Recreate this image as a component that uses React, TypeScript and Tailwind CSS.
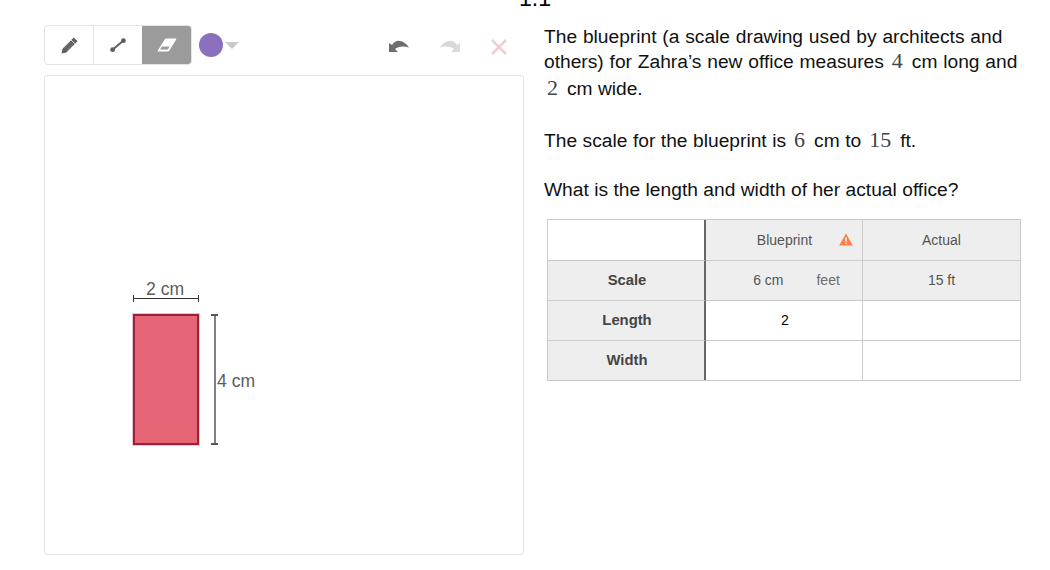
import { useState } from "react";

const sans = { fontFamily: '"Liberation Sans", Arial, sans-serif' };

function M({ children, first }: { children: string; first?: boolean }) {
  return (
    <span className={`${first ? "ml-[3px]" : "ml-[8px]"} mr-[9px] font-['Liberation_Serif',serif] text-[22px] leading-[20px] text-[#444]`}>
      {children}
    </span>
  );
}

function Toolbar() {
  const [tool, setTool] = useState("eraser");
  const btn = "flex h-full items-center justify-center";
  return (
    <div className="flex h-[40px] items-center">
      <div className="flex h-full w-[148px] overflow-hidden rounded-[4px] border border-[#e3e3e3]">
        <button onClick={() => setTool("pencil")} className={`${btn} w-[49px] border-r border-[#e3e3e3]`} aria-label="Pencil">
          <svg viewBox="0 0 16 16" className="h-[17px] w-[17px]">
            <path d="M12 .5 15.5 4 5 14.6.5 15.5 1.4 11Z" fill="#5f5f5f" />
            <path d="M9.6 2.9 13.1 6.4" stroke="#fff" strokeWidth="0.8" />
            <path d="M3.2 10.6 8.8 5M5.4 12.8 11 7.2" stroke="#8b8b8b" strokeWidth="0.7" />
          </svg>
        </button>
        <button onClick={() => setTool("line")} className={`${btn} w-[48px]`} aria-label="Line">
          <svg viewBox="0 0 16 16" className="h-[16px] w-[16px]">
            <path d="M2.5 12.8 13.5 3.6" stroke="#5f5f5f" strokeWidth="2" />
            <circle cx="2.6" cy="12.7" r="2.4" fill="#5f5f5f" />
            <circle cx="13.4" cy="3.7" r="2.4" fill="#5f5f5f" />
          </svg>
        </button>
        <button onClick={() => setTool("eraser")} className={`${btn} flex-1 bg-[#9b9b9b]`} aria-label="Eraser">
          <svg viewBox="0 0 20 14" className="h-[14px] w-[20px]">
            <path d="M8.5 1H19L11.5 13H1Z" fill="#fff" stroke="#fff" strokeWidth="1" strokeLinejoin="round" />
            <path d="M5 8.4H12.6L10.8 11.6H3Z" fill="#9b9b9b" />
          </svg>
        </button>
      </div>
      <div className="ml-[7px] h-[24px] w-[24px] rounded-full bg-[#8a70bd]" />
      <div className="ml-[2px] h-0 w-0 border-x-[7px] border-t-[7px] border-x-transparent border-t-[#c9c9c9]" />
      <div className="ml-auto mr-[17px] mt-[4px] flex items-center gap-[31px]">
        <svg viewBox="0 0 20 12" className="mb-[2px] h-[12px] w-[20px]" aria-label="Undo">
          <path d="M0 3V12H9L6 9C9 6.5 14 5.5 20 7.5 17 3 12 0 8 1 6 1.5 4.5 2.5 3 5Z" fill="#6d6d6d" />
        </svg>
        <svg viewBox="0 0 20 12" className="mb-[2px] h-[12px] w-[20px]" aria-label="Redo">
          <path d="M20 3V12H11L14 9C11 6.5 6 5.5 0 7.5 3 3 8 0 12 1 14 1.5 15.5 2.5 17 5Z" fill="#d9d9d9" />
        </svg>
        <svg viewBox="0 0 16 16" className="h-[16px] w-[16px]" aria-label="Clear">
          <path d="M1 1 15 15M15 1 1 15" stroke="#eccfcf" strokeWidth="2.6" />
        </svg>
      </div>
    </div>
  );
}

function Canvas() {
  return (
    <div className="relative mt-[10px] h-[480px] w-full rounded-[3px] border border-[#e3e3e3] bg-white">
      <div className="absolute left-[88px] top-[238px] h-[131px] w-[66px] border-2 border-[#9c2138] bg-[#e66677] shadow-[0_0_0_1px_rgba(156,33,56,0.25)]" />
      <div className="absolute left-[88px] top-[219px] h-[7px] w-[66px] border-x border-[#333]">
        <div className="mt-[3px] h-px bg-[#333]" />
      </div>
      <div className="absolute left-[101px] top-[203px] text-[17.6px] leading-[20px] text-[#5c5c5c]">2 cm</div>
      <div className="absolute left-[166px] top-[238px] flex h-[131px] w-[7px] flex-col items-center justify-between">
        <div className="h-[2px] w-[7px] bg-[#555]" />
        <div className="w-[2px] flex-1 bg-[#808080]" />
        <div className="h-[2px] w-[7px] bg-[#555]" />
      </div>
      <div className="absolute left-[172px] top-[295px] text-[17.6px] leading-[20px] text-[#5c5c5c]">4 cm</div>
    </div>
  );
}

function Cell({ children, shade, bold, thick, last, bottom, className = "" }: {
  children?: React.ReactNode; shade?: boolean; bold?: boolean; thick?: boolean; last?: boolean; bottom?: boolean; className?: string;
}) {
  return (
    <div
      className={`flex items-center justify-center border-[#cbcbcb] ${last ? "" : "border-r"} ${bottom ? "" : "border-b"} ${thick ? "border-r-2 border-r-[#666]" : ""} ${shade ? "bg-[#eeeeee]" : "bg-white"} ${bold ? "pl-[2px] text-[14.8px] font-bold text-[#444]" : "text-[14px] text-[#555]"} ${className}`}
    >
      {children}
    </div>
  );
}

function Table() {
  return (
    <div className="ml-[3px] mt-[17px] grid h-[162px] w-[474px] grid-cols-[158px_157px_1fr] grid-rows-[41px_40px_40px_1fr] border border-[#cbcbcb]">
      <Cell thick />
      <Cell shade className="relative">
        <span className="mr-[-1px]">Blueprint</span>
        <svg viewBox="0 0 14 13" className="absolute right-[9px] top-[13px] h-[13px] w-[14px]" aria-label="Warning">
          <path d="M7 .5 13.8 12.5H.2Z" fill="#fc7c4a" />
          <path d="M7 4.5V8.6M7 9.7V11" stroke="#fff" strokeWidth="1.5" />
        </svg>
      </Cell>
      <Cell shade last>Actual</Cell>

      <Cell shade bold thick>Scale</Cell>
      <Cell shade>
        <span className="ml-[25px]">6 cm</span>
        <span className="ml-[33px] text-[#6d6d6d]">feet</span>
      </Cell>
      <Cell shade last>15 ft</Cell>

      <Cell shade bold thick>Length</Cell>
      <Cell className="pl-[2px] !text-black">2</Cell>
      <Cell last />

      <Cell shade bold thick bottom>Width</Cell>
      <Cell bottom />
      <Cell last bottom />
    </div>
  );
}

export default function App() {
  return (
    <div className="relative h-[570px] w-[1050px] overflow-hidden bg-white" style={sans}>
      <div className="absolute left-[519px] top-[-14px] text-[23px] leading-[24px] text-black">1.1</div>
      <div className="flex pl-[44px] pt-[25px]">
        <div className="w-[480px]">
          <Toolbar />
          <Canvas />
        </div>
        <div className="ml-[20px] w-[480px]">
          <div className="mt-[-1px] text-[19.2px] leading-[25px] text-[#111]">
            <p className="[word-spacing:0.5px]">The blueprint (a scale drawing used by architects and</p>
            <p className="[word-spacing:0.5px]">others) for Zahra’s new office measures<M>4</M>cm long and</p>
            <p className="mt-[2px]"><M first>2</M>cm wide.</p>
            <p className="mt-[27px] [word-spacing:0.2px]">The scale for the blueprint is<M>6</M>cm to<M>15</M>ft.</p>
            <p className="mt-[24px] [word-spacing:0.1px]">What is the length and width of her actual office?</p>
          </div>
          <Table />
        </div>
      </div>
    </div>
  );
}
